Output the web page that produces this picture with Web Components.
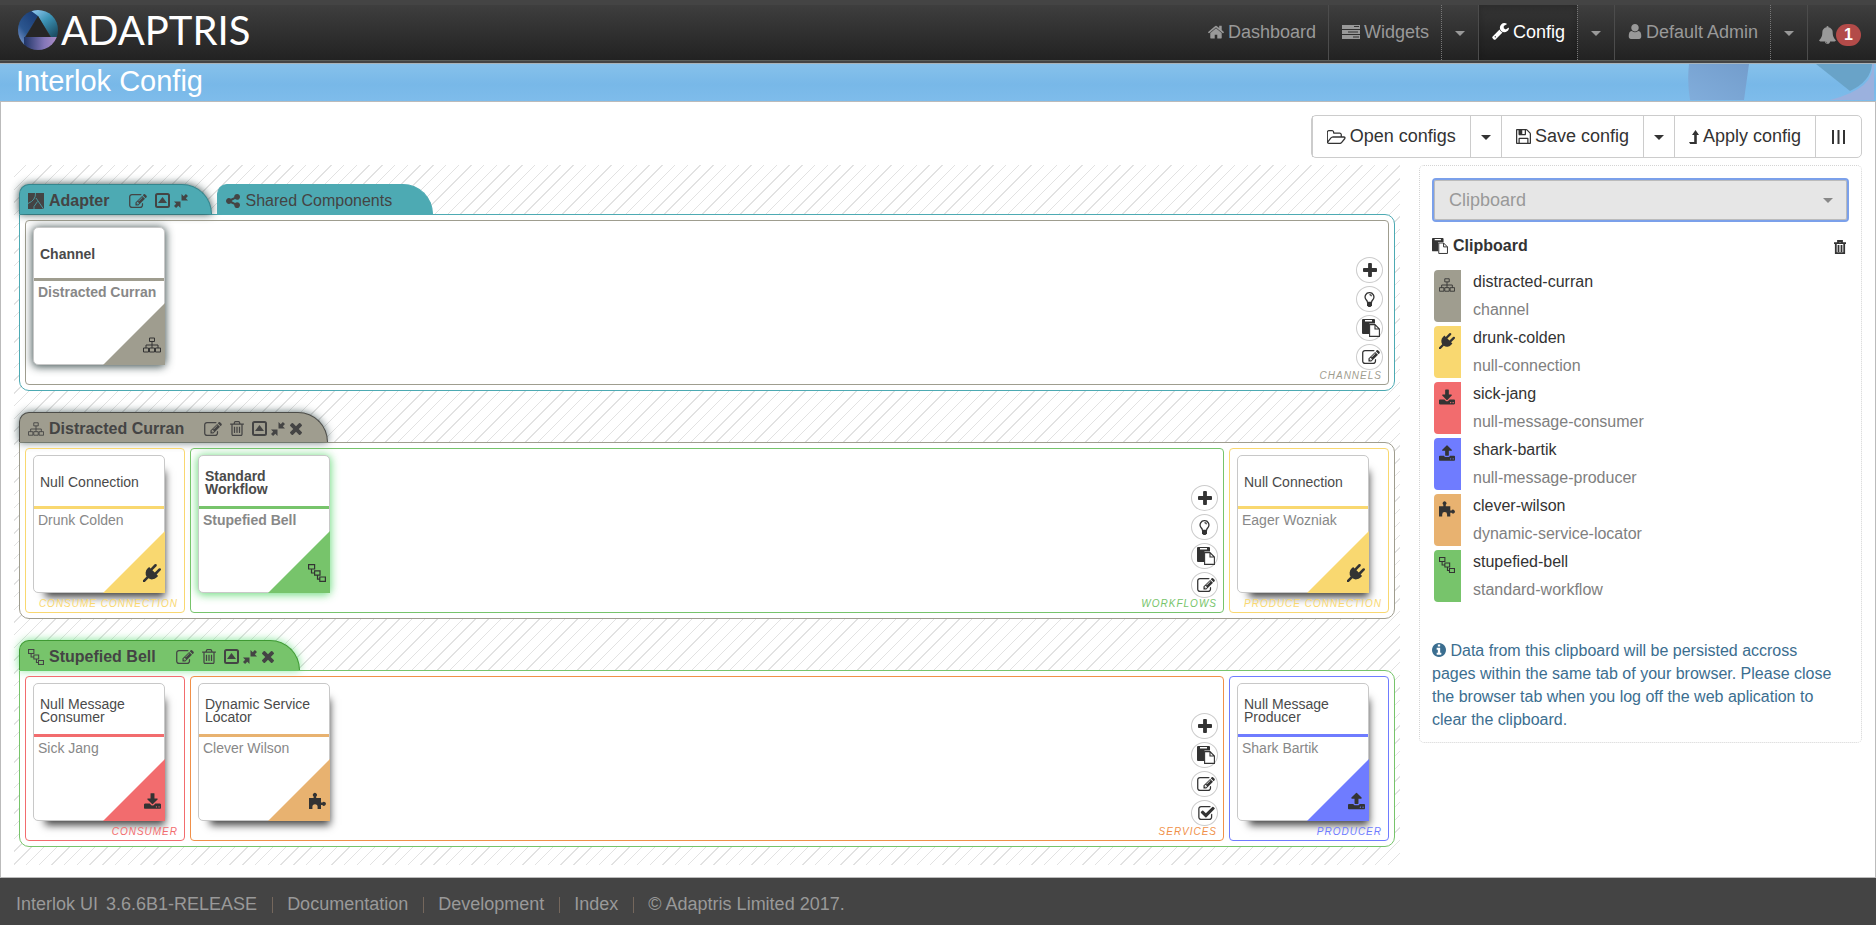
<!DOCTYPE html>
<html lang="en">
<head>
<meta charset="utf-8">
<title>Interlok Config</title>
<style>
  html { height: 100%; }
  body {
    margin: 0; min-height: 100%; display: flex; flex-direction: column;
    background: #fff; color: #333; font: 16px/23px "Liberation Sans", Arial, sans-serif;
    --teal: #4daab3; --taupe: #9f9d8f; --yellow: #f9d870; --green: #77c46b;
    --red: #f26c6e; --sand: #e8b270; --orange: #f09048; --blue: #6f7cff;
  }
  config-page { flex: 1; }
</style>
</head>
<body>
<app-header></app-header>
<page-banner>Interlok Config</page-banner>
<config-page>
  <config-toolbar slot="toolbar"></config-toolbar>

  <work-block style="--c: var(--teal); --edge: #35868e; --glow: rgba(20,45,45,.85)">
    <block-tab slot="tabs" icon="adapter" tools="edit up compress" active>Adapter</block-tab>
    <block-tab slot="tabs" icon="share">Shared Components</block-tab>
    <drop-zone wide label="Channels" tools="plus bulb paste edit" style="--z: var(--taupe)">
      <component-card icon="sitemap" name="Distracted Curran" selected style="--k: var(--taupe); --glow: rgba(40,60,60,.85)">Channel</component-card>
    </drop-zone>
  </work-block>

  <work-block style="--c: var(--taupe); --edge: #4c4c48; --glow: rgba(20,45,45,.7)">
    <block-tab slot="tabs" icon="sitemap" tools="edit trash up compress times" active>Distracted Curran</block-tab>
    <drop-zone label="Consume Connection" style="--z: var(--yellow)">
      <component-card icon="plug" name="Drunk Colden" style="--k: var(--yellow)">Null Connection</component-card>
    </drop-zone>
    <drop-zone wide label="Workflows" tools="plus bulb paste edit" style="--z: var(--green)">
      <component-card icon="flow" name="Stupefied Bell" selected style="--k: var(--green); --glow: rgba(90,215,110,.85)">Standard Workflow</component-card>
    </drop-zone>
    <drop-zone label="Produce Connection" style="--z: var(--yellow)">
      <component-card icon="plug" name="Eager Wozniak" style="--k: var(--yellow)">Null Connection</component-card>
    </drop-zone>
  </work-block>

  <work-block style="--c: var(--green); --edge: #3f9a33; --glow: rgba(70,215,100,.7)">
    <block-tab slot="tabs" icon="flow" tools="edit trash up compress times" active>Stupefied Bell</block-tab>
    <drop-zone label="Consumer" style="--z: var(--red)">
      <component-card icon="download" name="Sick Jang" style="--k: var(--red)">Null Message Consumer</component-card>
    </drop-zone>
    <drop-zone wide label="Services" tools="plus paste edit check" style="--z: var(--orange)">
      <component-card icon="puzzle" name="Clever Wilson" style="--k: var(--sand)">Dynamic Service Locator</component-card>
    </drop-zone>
    <drop-zone label="Producer" style="--z: var(--blue)">
      <component-card icon="upload" name="Shark Bartik" style="--k: var(--blue)">Null Message Producer</component-card>
    </drop-zone>
  </work-block>

  <clipboard-panel slot="side">
    <clipboard-item icon="sitemap" type="channel" style="--k: var(--taupe)">distracted-curran</clipboard-item>
    <clipboard-item icon="plug" type="null-connection" style="--k: var(--yellow)">drunk-colden</clipboard-item>
    <clipboard-item icon="download" type="null-message-consumer" style="--k: var(--red)">sick-jang</clipboard-item>
    <clipboard-item icon="upload" type="null-message-producer" style="--k: var(--blue)">shark-bartik</clipboard-item>
    <clipboard-item icon="puzzle" type="dynamic-service-locator" style="--k: var(--sand)">clever-wilson</clipboard-item>
    <clipboard-item icon="flow" type="standard-workflow" style="--k: var(--green)">stupefied-bell</clipboard-item>
  </clipboard-panel>
</config-page>
<app-footer></app-footer>

<script>
// Registers an element whose open shadow root is filled from a style and a markup function.
function element(name, css, html) {
  customElements.define(name, class extends HTMLElement {
    connectedCallback() {
      if (this.shadowRoot) return;
      this.attachShadow({ mode: 'open' }).innerHTML =
        `<style>*{box-sizing:border-box}button{font:inherit;color:inherit;margin:0;cursor:pointer}${css}</style>${html(this)}`;
    }
  });
}
const attr = (el, n, d = '') => el.getAttribute(n) || d;

// name: [viewBox, markup]; solid shapes are filled with currentColor.
const ICONS = {
  home: ['90 220 1612 1330', '<path d="M1472 992v480q0 26-19 45t-45 19h-384v-384h-256v384h-384q-26 0-45-19t-19-45v-480q0-1 .5-3t.5-3l575-474 575 474q1 2 1 6zm223-69l-62 74q-8 9-21 11h-3q-13 0-21-7l-692-577-692 577q-12 8-24 7-13-2-21-11l-62-74q-8-10-7-23.5t11-21.5l719-599q32-26 76-26t76 26l244 204v-195q0-14 9-23t23-9h192q14 0 23 9t9 23v408l219 182q10 8 11 21.5t-7 23.5z"/>'],
  tasks: ['0 0 18 14', '<path fill-rule="evenodd" d="M0 0h18v4H0zM12 1v1h5V1zM0 5h18v4H0zM6 6.5v1h10v-1zM0 10h18v4H0zM11 11.5v1h6v-1z"/>'],
  wrench: ['60 128 1670 1650', '<path d="M448 1472q0-26-19-45t-45-19-45 19-19 45 19 45 45 19 45-19 19-45zm644-420l-682 682q-37 37-90 37-52 0-91-37l-106-108q-38-36-38-90 0-53 38-91l681-681q39 98 114.5 173.5t173.5 114.5zm634-435q0 39-23 106-47 134-164.5 217.5t-258.5 83.5q-185 0-316.5-131.5t-131.5-316.5 131.5-316.5 316.5-131.5q58 0 121.5 16.5t107.5 46.5q16 11 16 28t-16 28l-293 169v224l193 107q5-3 79-48.5t135.5-81 70.5-35.5q15 0 23.5 10t8.5 25z"/>'],
  user: ['256 128 1280 1536', '<path d="M1536 1399q0 109-62.5 187t-150.5 78h-854q-88 0-150.5-78t-62.5-187q0-85 8.5-160.5t31.5-152 58.5-131 94-89 134.5-34.5q131 128 313 128t313-128q76 0 134.5 34.5t94 89 58.5 131 31.5 152 8.5 160.5zm-256-887q0 159-112.5 271.5t-271.5 112.5-271.5-112.5-112.5-271.5 112.5-271.5 271.5-112.5 271.5 112.5 112.5 271.5z"/>'],
  bell: ['64 0 1664 1792', '<path d="M912 1696q0-16-16-16-59 0-101.5-42.5t-42.5-101.5q0-16-16-16t-16 16q0 73 51.5 124.5t124.5 51.5q16 0 16-16zm816-288q0 52-38 90t-90 38h-448q0 106-75 181t-181 75-181-75-75-181h-448q-52 0-90-38t-38-90q50-42 91-88t85-119.5 74.5-158.5 50-206 19.5-260q0-152 117-282.5t307-158.5q-8-19-8-39 0-40 28-68t68-28 68 28 28 68q0 20-8 39 190 28 307 158.5t117 282.5q0 139 19.5 260t50 206 74.5 158.5 85 119.5 91 88z"/>'],
  edit: ['0 128 1792 1408', '<path d="M888 1184l116-116-152-152-116 116v56h96v96h56zm440-720q-16-16-33 1l-350 350q-17 17-1 33t33-1l350-350q17-17 1-33zm80 594v190q0 119-84.5 203.5t-203.5 84.5h-832q-119 0-203.5-84.5t-84.5-203.5v-832q0-119 84.5-203.5t203.5-84.5h832q63 0 117 25 15 7 18 23 3 17-9 29l-49 49q-14 14-32 8-23-6-45-6h-832q-66 0-113 47t-47 113v832q0 66 47 113t113 47h832q66 0 113-47t47-113v-126q0-13 9-22l64-64q15-15 35-7t20 29zm-96-738l288 288-672 672h-288v-288zm444 132l-92 92-288-288 92-92q28-28 68-28t68 28l152 152q28 28 28 68t-28 68z"/>'],
  trash: ['192 128 1408 1536', '<path d="M704 736v576q0 14-9 23t-23 9h-64q-14 0-23-9t-9-23v-576q0-14 9-23t23-9h64q14 0 23 9t9 23zm256 0v576q0 14-9 23t-23 9h-64q-14 0-23-9t-9-23v-576q0-14 9-23t23-9h64q14 0 23 9t9 23zm256 0v576q0 14-9 23t-23 9h-64q-14 0-23-9t-9-23v-576q0-14 9-23t23-9h64q14 0 23 9t9 23zm128 724v-948h-896v948q0 22 7 40.5t14.5 27 10.5 8.5h832q3 0 10.5-8.5t14.5-27 7-40.5zm-672-1076h448l-48-117q-7-9-17-11h-317q-10 2-17 11zm928 32v64q0 14-9 23t-23 9h-96v948q0 83-47 143.5t-113 60.5h-832q-66 0-113-58.5t-47-141.5v-952h-96q-14 0-23-9t-9-23v-64q0-14 9-23t23-9h309l70-167q15-37 54-63t79-26h320q40 0 79 26t54 63l70 167h309q14 0 23 9t9 23z"/>'],
  bin: ['0 0 12 14', '<path fill="none" stroke="currentColor" stroke-width="1.8" d="M0 3.200h12M4 3V1h4v2M1.800 3.500v9.600h8.400V3.500M4.500 5v7M7.500 5v7"/>'],
  share: ['128 128 1536 1536', '<path d="M1344 1024q133 0 226.5 93.5t93.5 226.5-93.5 226.5-226.5 93.5-226.5-93.5-93.5-226.5q0-12 2-34l-360-180q-92 86-218 86-133 0-226.5-93.5t-93.5-226.5 93.5-226.5 226.5-93.5q126 0 218 86l360-180q-2-22-2-34 0-133 93.5-226.5t226.5-93.5 226.5 93.5 93.5 226.5-93.5 226.5-226.5 93.5q-126 0-218-86l-360 180q2 22 2 34t-2 34l360 180q92-86 218-86z"/>'],
  plus: ['192 128 1408 1408', '<path d="M1600 736v192q0 40-28 68t-68 28h-416v416q0 40-28 68t-68 28h-192q-40 0-68-28t-28-68v-416h-416q-40 0-68-28t-28-68v-192q0-40 28-68t68-28h416v-416q0-40 28-68t68-28h192q40 0 68 28t28 68v416h416q40 0 68 28t28 68z"/>'],
  times: ['302 366 1188 1188', '<path d="M1490 1322q0 40-28 68l-136 136q-28 28-68 28t-68-28l-294-294-294 294q-28 28-68 28t-68-28l-136-136q-28-28-28-68t28-68l294-294-294-294q-28-28-28-68t28-68l136-136q28-28 68-28t68 28l294 294 294-294q28-28 68-28t68 28l136 136q28 28 28 68t-28 68l-294 294 294 294q28 28 28 68z"/>'],
  info: ['128 128 1536 1536', '<path d="M1152 1376v-160q0-14-9-23t-23-9h-96v-512q0-14-9-23t-23-9h-320q-14 0-23 9t-9 23v160q0 14 9 23t23 9h96v320h-96q-14 0-23 9t-9 23v160q0 14 9 23t23 9h448q14 0 23-9t9-23zm-128-896v-160q0-14-9-23t-23-9h-192q-14 0-23 9t-9 23v160q0 14 9 23t23 9h192q14 0 23-9t9-23zm640 416q0 209-103 385.5t-279.5 279.5-385.5 103-385.5-103-279.5-279.5-103-385.5 103-385.5 279.5-279.5 385.5-103 385.5 103 279.5 279.5 103 385.5z"/>'],
  check: ['64 128 1664 1408', '<path d="M1472 930v318q0 119-84.5 203.5t-203.5 84.5h-832q-119 0-203.5-84.5t-84.5-203.5v-832q0-119 84.5-203.5t203.5-84.5h832q63 0 117 25 15 7 18 23 3 17-9 29l-49 49q-10 10-23 10-3 0-9-2-23-6-45-6h-832q-66 0-113 47t-47 113v832q0 66 47 113t113 47h832q66 0 113-47t47-113v-254q0-13 9-22l64-64q10-10 23-10 6 0 12 3 20 8 20 29zm231-489l-814 814q-24 24-57 24t-57-24l-430-430q-24-24-24-57t24-57l110-110q24-24 57-24t57 24l263 263 647-647q24-24 57-24t57 24l110 110q24 24 24 57t-24 57z"/>'],
  save: ['128 128 1536 1536', '<path d="M512 1536h768v-384h-768v384zm896 0h128v-896q0-14-10-38.5t-20-34.5l-281-281q-10-10-34-20t-39-10v416q0 40-28 68t-68 28h-576q-40 0-68-28t-28-68v-416h-128v1280h128v-416q0-40 28-68t68-28h832q40 0 68 28t28 68v416zm-384-928v-320q0-13-9.5-22.5t-22.5-9.5h-192q-13 0-22.5 9.5t-9.5 22.5v320q0 13 9.5 22.5t22.5 9.5h192q13 0 22.5-9.5t9.5-22.5zm640 32v928q0 40-28 68t-68 28h-1344q-40 0-68-28t-28-68v-1344q0-40 28-68t68-28h928q40 0 88 20t76 48l280 280q28 28 48 76t20 88z"/>'],
  folder: ['0 128 1856 1408', '<path d="M1717 931q0-35-53-35h-1088q-40 0-85.5 21.5t-71.5 52.5l-294 363q-18 24-18 40 0 35 53 35h1088q40 0 86-22t71-53l294-363q18-22 18-39zm-1141-163h768v-160q0-40-28-68t-68-28h-576q-40 0-68-28t-28-68v-64q0-40-28-68t-68-28h-320q-40 0-68 28t-28 68v853l256-315q44-53 116-87.5t140-34.5zm1269 163q0 62-46 120l-295 363q-43 53-116 87.5t-140 34.5h-1088q-92 0-158-66t-66-158v-960q0-92 66-158t158-66h320q92 0 158 66t66 158v32h544q92 0 158 66t66 158v160h192q54 0 99 24.5t67 70.5q15 32 15 68z"/>'],
  apply: ['0 0 10 14', '<path d="M6.500 0L10 5H7.800v9H1.200L0 12h5.200V5H3z"/>'],
  columns: ['0 0 13 14', '<path d="M0 0h2v14H0zM5.500 0h2v14h-2zM11 0h2v14h-2z"/>'],
  plug: ['0 0 1792 1792', '<path d="M1755 453q37 38 37 90.5t-37 90.5l-401 400 150 150-160 160q-163 163-389.500 186.500t-411.500-100.500l-362 362h-181v-181l362-362q-124-185-100.500-411.500t186.500-389.500l160-160 150 150 400-401q38-37 91-37t90 37 37 90.500-37 90.500l-400 401 234 234 401-400q38-37 91-37t90 37z"/>'],
  download: ['64 0 1664 1536', '<path d="M1344 1344q0-26-19-45t-45-19-45 19-19 45 19 45 45 19 45-19 19-45zm256 0q0-26-19-45t-45-19-45 19-19 45 19 45 45 19 45-19 19-45zm128-224v320q0 40-28 68t-68 28h-1472q-40 0-68-28t-28-68v-320q0-40 28-68t68-28h465l135 136q58 56 136 56t136-56l136-136h464q40 0 68 28t28 68zm-325-569q17 41-14 70l-448 448q-18 19-45 19t-45-19l-448-448q-31-29-14-70 17-39 59-39h256v-448q0-26 19-45t45-19h256q26 0 45 19t19 45v448h256q42 0 59 39z"/>'],
  upload: ['64 64 1664 1600', '<path d="M1344 1472q0-26-19-45t-45-19-45 19-19 45 19 45 45 19 45-19 19-45zm256 0q0-26-19-45t-45-19-45 19-19 45 19 45 45 19 45-19 19-45zm128-224v320q0 40-28 68t-68 28h-1472q-40 0-68-28t-28-68v-320q0-40 28-68t68-28h427q21 56 70.500 92t110.500 36h256q61 0 110.500-36t70.500-92h427q40 0 68 28t28 68zm-325-648q-17 40-59 40h-256v448q0 26-19 45t-45 19h-256q-26 0-45-19t-19-45v-448h-256q-42 0-59-40-17-39 14-69l448-448q18-19 45-19t45 19l448 448q31 30 14 69z"/>'],
  sitemap: ['0 0 18 15', '<path fill="none" stroke="currentColor" d="M6.500.5h5v3.500h-5zM.5 10.500h5v4h-5zM6.500 10.500h5v4h-5zM12.500 10.500h5v4h-5zM9 4v6.500M3 10.500v-3h12v3"/>'],
  flow: ['0 0 18 18', '<path fill="none" stroke="currentColor" stroke-width="1.200" d="M.6.6h6v4.400h-6zM6.600 6.800h5.400v4.400H6.600zM11.800 13h5.600v4.400h-5.600zM3.500 5v4h3.100M9.500 11.200v4h2.300"/>'],
  puzzle: ['0 0 17 16', '<path d="M0 5h4.600V3.400a2 2 0 1 1 2.600 0V5H12v4.500h1.300a2 2 0 1 1 0 2.600H12V16H8.600v-2.200a2.600 2.600 0 0 0-5.200 0V16H0z"/>'],
  adapter: ['0 0 16 16', '<path d="M0 0h16v16H0z"/><path fill="none" stroke="#4daab3" stroke-width=".8" d="M7.500 0Q8 7 0 10.500M8 5L15.500 16M9.500 8.500L6 13.500V16"/>'],
  up: ['0 0 15 15', '<path fill="none" stroke="currentColor" stroke-width="2" d="M2.500 1h10q1.500 0 1.500 1.500v10q0 1.500-1.500 1.500h-10Q1 14 1 12.500v-10Q1 1 2.500 1z"/><path d="M7.500 4L12 10H3z"/>'],
  compress: ['0 0 14 14', '<path d="M7.500 0v6.500H14l-2.200-2.200L14 2.100 11.900 0 9.700 2.200zM0 7.500h6.500V14l-2.200-2.200L2.100 14 0 11.900l2.200-2.200z"/>'],
  bulb: ['0 0 11 15', '<path fill="none" stroke="currentColor" stroke-width="1.300" d="M3.500 10.300Q3.400 8.800 1.800 7.200A4.200 4.200 0 0 1 5.500.7 4.200 4.200 0 0 1 9.200 7.200Q7.600 8.800 7.500 10.300zM5.500 2.700q1.800 0 1.900 1.500"/><path d="M3 10h5v3.500L6.500 15h-2L3 13.500z"/>'],
  paste: ['0 0 18 18', '<path fill-rule="evenodd" d="M1 0h11q1 0 1 1v3.500H8q-1 0-1 1V15H1q-1 0-1-1V1q0-1 1-1zM3 1v1.500h7V1z"/><path fill="#fff" stroke="currentColor" stroke-width="1.100" d="M7.600 5.600h5.400l4.400 4.400v7.400H7.600zM13 5.600V10h4.400"/>'],
  caret: ['0 0 10 5', '<path d="M0 0h10L5 5z"/>'],
};

customElements.define('ui-icon', class extends HTMLElement {
  connectedCallback() {
    if (this.shadowRoot) return;
    const [box, body] = ICONS[attr(this, 'name')];
    const w = attr(this, 'w', '16'), h = attr(this, 'h', w);
    this.attachShadow({ mode: 'open' }).innerHTML =
      `<style>:host{display:inline-flex;flex:none;width:${w}px;height:${h}px}svg{display:block;width:100%;height:100%;fill:currentColor}</style>
       <svg viewBox="${box}" aria-hidden="true">${body}</svg>`;
  }
});

element('brand-logo', `
  :host{display:flex}
  a{display:flex;align-items:center;gap:3px;color:#fff;text-decoration:none;font:40px/40px Lato,sans-serif}
  svg{display:block;width:40px;height:40px}`,
  () => `<a href="#"><svg viewBox="0 0 40 40" aria-hidden="true">
    <defs>
      <linearGradient id="a" x1="0" y1="1" x2=".6" y2="0"><stop offset="0" stop-color="#9db4e6"/><stop offset=".5" stop-color="#2b568f"/><stop offset="1" stop-color="#1c3f78"/></linearGradient>
      <linearGradient id="b" x1="0" y1="0" x2=".8" y2="1"><stop offset="0" stop-color="#9ccdf5"/><stop offset=".5" stop-color="#3c93b5"/><stop offset="1" stop-color="#1d4f66"/></linearGradient>
      <linearGradient id="c" x1="0" x2="1"><stop offset="0" stop-color="#1f3566"/><stop offset=".6" stop-color="#8477b8"/><stop offset="1" stop-color="#b08fc8"/></linearGradient>
      <clipPath id="k"><circle cx="20" cy="20" r="20"/></clipPath>
    </defs>
    <g clip-path="url(#k)">
      <path fill="url(#a)" d="M0 0h19l1 6L7 27v13H0z"/>
      <path fill="url(#b)" d="M12 0h28v27H33L20 6z"/>
      <path fill="url(#c)" d="M6 27h34v13H6z"/>
      <path fill="#262626" d="M20 6L8 27h24z"/>
    </g></svg><span>ADAPTRIS</span></a>`);

element('nav-item', `
  :host{display:flex;border-left:1px solid #4c4c4c;color:#999}
  :host([first]){border-left-color:transparent}
  :host([active]) .main{color:#fff;background:rgba(0,0,0,.14);box-shadow:inset 0 3px 6px rgba(0,0,0,.2)}
  a{display:flex;align-items:center;gap:4px;padding:0 12px 2px 13px;color:inherit;text-decoration:none}
  button{display:flex;align-items:center;justify-content:center;width:37px;padding:1px 0 0;border:0;border-left:1px dotted #777;background:none}`,
  el => `<a class="main" href="#"><ui-icon name="${attr(el,'icon')}" w="${attr(el,'w')}" h="${attr(el,'h')}"></ui-icon><slot></slot></a>` +
    (el.hasAttribute('menu') ? `<button type="button" aria-label="More"><ui-icon name="caret" w="10" h="5"></ui-icon></button>` : ''));

element('app-header', `
  :host{display:block;border-top:5px solid #444;border-bottom:1px solid #a9b4ba;background:#444;font-size:18px;line-height:20px}
  .bar{display:flex;height:56px;margin-bottom:2px;padding-left:18px;border-bottom:1px solid #5b5f5b;background:linear-gradient(#3e3e3e,#222)}
  brand-logo{align-items:flex-start;padding-top:5px}
  nav{display:flex;margin-left:auto}
  .alerts{display:flex;align-items:center;padding:4px 15px 0 11px;border-left:1px solid #4c4c4c;color:#999;text-decoration:none}
  .badge{padding:1px 8px;border-radius:11px;background:#b34b49;color:#fff;font-weight:bold;font-size:16px}`,
  () => `<div class="bar"><brand-logo></brand-logo><nav>
    <nav-item first icon="home" w="16" h="14">Dashboard</nav-item>
    <nav-item icon="tasks" w="18" h="14" menu>Widgets</nav-item>
    <nav-item active icon="wrench" w="17" menu>Config</nav-item>
    <nav-item icon="user" w="14" h="15" menu>Default Admin</nav-item>
    <a class="alerts" href="#"><ui-icon name="bell" w="17" h="18"></ui-icon><span class="badge">1</span></a>
  </nav></div>`);

element('page-banner', `
  :host{display:flex;justify-content:space-between;height:37px;padding-left:16px;border-bottom:1px solid #bbb;background:linear-gradient(#86c1eb,#78b8e8 55%,#7ebceb)}
  h1{margin:0;color:#fff;font:29px/35px "Liberation Sans",Arial,sans-serif}
  svg{display:block;width:188px;height:37px}`,
  () => `<h1><slot></slot></h1><svg viewBox="0 0 188 37" aria-hidden="true">
    <defs><linearGradient id="g" x1="1" y1="0" x2="0" y2="1"><stop offset="0" stop-color="#739dcc"/><stop offset="1" stop-color="#81addb"/></linearGradient></defs>
    <path fill="url(#g)" d="M1 0h60l-5 36H2Q-1 18 1 0z"/>
    <path fill="#69a3c8" d="M128 0h56q-1 17-22 27z"/>
    <path fill="#9bb1de" d="M142 36q46-12 42-36h2v36z"/></svg>`);

element('config-page', `
  :host{display:grid;grid-template-columns:minmax(0,1fr) 443px;grid-template-rows:auto 1fr;column-gap:19px;row-gap:7px;
    padding:13px 13px 12px;border:1px solid #bbb;border-top:0}
  .toolbar{grid-column:1/-1;display:flex;justify-content:flex-end}
  .work{display:flex;flex-direction:column;gap:21px;padding:19px 5px 18px;
    background:repeating-linear-gradient(135deg,transparent 0 8px,#e2e2e2 8px 9px)}
  .side{align-self:start}`,
  () => `<div class="toolbar"><slot name="toolbar"></slot></div>
    <main class="work"><slot></slot></main><aside class="side"><slot name="side"></slot></aside>`);

element('config-toolbar', `
  :host{display:flex;box-sizing:border-box;height:43px;border:1px solid #ccc;border-radius:5px;font-size:18px}
  button{display:flex;align-items:center;gap:4px;padding:0 14px;border:0;border-left:1px solid #ccc;background:none}
  button:first-child{border-left:0}
  .menu{padding:2px 10px 0}
  .cols{padding:0 16px}`,
  () => `<button type="button"><ui-icon name="folder" w="19" h="14"></ui-icon>Open configs</button>
    <button type="button" class="menu" aria-label="Open options"><ui-icon name="caret" w="10" h="5"></ui-icon></button>
    <button type="button"><ui-icon name="save" w="15"></ui-icon>Save config</button>
    <button type="button" class="menu" aria-label="Save options"><ui-icon name="caret" w="10" h="5"></ui-icon></button>
    <button type="button"><ui-icon name="apply" w="10" h="14"></ui-icon>Apply config</button>
    <button type="button" class="cols" aria-label="Columns"><ui-icon name="columns" w="13" h="14"></ui-icon></button>`);

element('work-block', `
  :host{display:block}
  .tabs{display:flex;gap:5px}
  .panel{display:flex;gap:5px;padding:5px;border:1px solid var(--c);border-radius:0 10px 10px 10px;background:#fff}`,
  () => `<div class="tabs"><slot name="tabs"></slot></div><section class="panel"><slot></slot></section>`);

const TOOL = { edit: [18, 14, 'Edit'], up: [15, 15, 'Collapse'], compress: [14, 14, 'Compress'], trash: [14, 15, 'Delete'],
  times: [12, 12, 'Close'], plus: [14, 14, 'Add'], bulb: [11, 15, 'Suggest'], paste: [18, 18, 'Paste'], check: [17, 14, 'Check'] };
const toolButtons = list => list.split(' ').filter(Boolean).map(t =>
  `<button type="button" class="${t}" aria-label="${TOOL[t][2]}"><ui-icon name="${t}" w="${TOOL[t][0]}" h="${TOOL[t][1]}"></ui-icon></button>`).join('');

element('block-tab', `
  :host{display:flex;align-items:center;gap:5px;height:30px;padding:2px 40px 0 8px;border:1px solid var(--c);border-bottom:0;border-radius:10px 30px 0 0;
    background:var(--c);color:#444;font-size:16px;line-height:20px;box-sizing:border-box}
  :host([active]){padding-right:23px;border-color:var(--edge);font-weight:bold;box-shadow:0 0 8px var(--glow)}
  .tools{display:flex;align-items:center;gap:4px;margin-left:15px}
  button{display:flex;padding:0;border:0;background:none}
  .edit,.trash{margin-right:4px}
  .times{margin:0 2px 0 1px}`,
  el => `<ui-icon name="${attr(el,'icon')}" w="${attr(el,'icon')==='share'?14:16}"></ui-icon><span><slot></slot></span>` +
    (el.hasAttribute('tools') ? `<span class="tools">${toolButtons(attr(el,'tools'))}</span>` : ''));

element('drop-zone', `
  :host{display:block;box-sizing:border-box;flex:0 0 160px;padding:6px 6px 2px 7px;border:1px solid var(--z);border-radius:4px}
  :host([wide]){flex:1 1 0}
  .row{display:flex;min-height:143px;justify-content:space-between}
  .tools{display:flex;flex-direction:column;align-items:center;align-self:flex-end;gap:3px;margin-right:-1px}
  .tools button{display:flex;align-items:center;justify-content:center;width:27px;height:26px;padding:0;border:1px solid #ccc;border-radius:50%;background:#fff}
  .tools .edit,.tools .paste,.tools .check{padding-left:3px}
  .label{position:relative;color:var(--z);font-style:italic;font-size:10px;line-height:12px;letter-spacing:1px;text-transform:uppercase;text-align:right;white-space:nowrap}`,
  el => `<div class="row"><slot></slot>${el.hasAttribute('tools') ? `<div class="tools">${toolButtons(attr(el,'tools'))}</div>` : ''}</div>
    <div class="label">${attr(el,'label')}</div>`);

const GLYPH = { sitemap: 18, plug: 18, flow: 18, download: 17, puzzle: 17, upload: 17 };
element('component-card', `
  :host{position:relative;display:flex;flex-direction:column;box-sizing:border-box;flex:none;width:132px;height:138px;border:1px solid #c8c8c8;border-radius:5px;
    background:#fff;font-size:14px;line-height:16px;box-shadow:6px 10px 8px -6px rgba(0,0,0,.75)}
  :host([selected]){font-weight:bold;box-shadow:0 1px 9px 1px var(--glow)}
  .title{display:flex;align-items:center;box-sizing:border-box;height:53px;padding:3px 16px 0 6px;border-bottom:3px solid var(--k);line-height:13px;color:#4a4a4a}
  .name{padding:3px 4px;color:#888}
  .corner{position:absolute;right:-1px;bottom:-1px;display:flex;align-items:flex-end;justify-content:flex-end;width:62px;height:62px;padding:0 4px 11px 0;
    background:var(--k);clip-path:polygon(100% 0,100% 100%,0 100%);color:#333}`,
  el => `<div class="title"><slot></slot></div><div class="name">${attr(el,'name')}</div>
      <div class="corner"><ui-icon name="${attr(el,'icon')}" w="${GLYPH[attr(el,'icon')]}" h="18"></ui-icon></div>`);

element('clipboard-panel', `
  :host{display:block;padding:12px 12px 11px;border:1px dotted #d4d4d4;border-radius:5px;box-sizing:border-box}
  .pick{display:grid;align-items:center}
  .pick>*{grid-area:1/1}
  select{appearance:none;width:100%;height:44px;padding:0 15px;border:2px solid #7ba0ea;border-radius:4px;background:#e6e6e6;color:#999;
    font:18px/24px "Liberation Sans",Arial,sans-serif;outline:0;opacity:1;box-shadow:inset 0 0 0 1px #bbb}
  .pick ui-icon{justify-self:end;margin-right:16px;color:#888;pointer-events:none}
  .head{display:flex;align-items:center;gap:5px;margin:12px 3px 13px 0}
  h2{margin:0;font-size:16px;line-height:23px}
  .head button{margin-left:auto;padding:2px 0 0;border:0;background:none;display:flex}
  .list{display:flex;flex-direction:column;gap:4px;padding-left:2px}
  p{margin:37px 0 0;padding-right:8px;color:#3b6e90}
  p ui-icon{vertical-align:-1px}`,
  () => `<div class="pick"><select aria-label="Panel"><option>Clipboard</option></select><ui-icon name="caret" w="10" h="5"></ui-icon></div>
    <div class="head"><ui-icon name="paste" w="16"></ui-icon><h2>Clipboard</h2><button type="button" aria-label="Empty clipboard"><ui-icon name="bin" w="12" h="14"></ui-icon></button></div>
    <div class="list"><slot></slot></div>
    <p><ui-icon name="info" w="14"></ui-icon> Data from this clipboard will be persisted accross pages within the same tab of your browser. Please close the browser tab when you log off the web aplication to clear the clipboard.</p>`);

element('clipboard-item', `
  :host{display:flex;gap:12px;line-height:24px}
  .chip{flex:none;display:flex;justify-content:center;align-items:flex-start;width:27px;padding:7px 2px 0 0;border-radius:4px 0 0 4px;background:var(--k);color:#333}
  .text{display:grid;row-gap:4px}
  small{font-size:16px;color:#808080}`,
  el => `<span class="chip"><ui-icon name="${attr(el,'icon')}" w="16"></ui-icon></span>
    <span class="text"><span><slot></slot></span><small>${attr(el,'type')}</small></span>`);

element('app-footer', `
  :host{display:flex;align-items:center;height:47px;padding:5px 16px 0;box-sizing:border-box;background:#444;color:#999;font-size:18px;line-height:20px;white-space:nowrap}
  a{color:inherit;text-decoration:none}
  i{width:1px;height:16px;margin:1px 14px 0 15px;background:#75675c}
  .ver{margin-left:8px}`,
  () => `<span>Interlok UI</span><span class="ver">3.6.6B1-RELEASE</span><i></i><a href="#">Documentation</a><i></i><a href="#">Development</a><i></i><a href="#">Index</a><i></i><span>© Adaptris Limited 2017.</span>`);
</script>
</body>
</html>
